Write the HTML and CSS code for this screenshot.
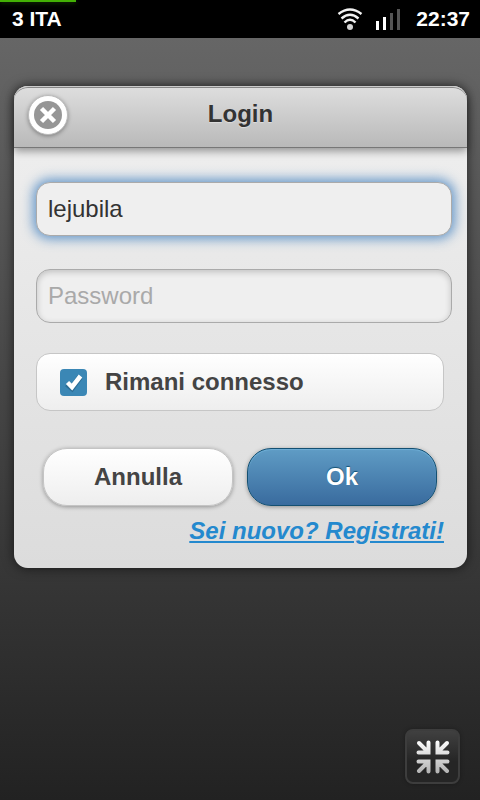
FILE: index.html
```
<!DOCTYPE html>
<html lang="it">
<head>
<meta charset="utf-8">
<meta name="viewport" content="width=device-width, initial-scale=1">
<title>Login</title>
<link rel="stylesheet" href="styles.css">
</head>
<body>
<header class="status">
  <div class="progress"></div>
  <span class="carrier">3 ITA</span>
  <svg class="wifi" width="26" height="24" viewBox="0 0 26 24" aria-hidden="true">
    <g fill="none" stroke="#f2f2f2" stroke-width="2.400">
      <path d="M1.500 7Q13 -2 24.500 7"/>
      <path d="M4.500 11.500Q13 4 21.500 11.500"/>
      <path d="M7.500 15.500Q13 10 18.500 15.500"/>
    </g>
    <circle cx="13" cy="20" r="3" fill="#d5d5d5"/>
  </svg>
  <svg class="signal" width="25" height="22" viewBox="0 0 25 22" aria-hidden="true">
    <path fill="#fff" d="M0 13h3v9H0zM7 9h3v13H7z"/>
    <path fill="#555" d="M14 5h3v17h-3zM21 1h3v21h-3z"/>
  </svg>
  <time class="clock">22:37</time>
</header>
<main class="screen">
  <section class="dialog" aria-labelledby="title">
    <div class="dialog-head">
      <button class="close" type="button" aria-label="Chiudi">
        <svg width="28" height="28" viewBox="0 0 28 28" aria-hidden="true">
          <circle cx="14" cy="14" r="14" fill="#969696"/>
          <path d="M7.500 7.500l13 13M20.500 7.500l-13 13" stroke="#fff" stroke-width="4.500"/>
        </svg>
      </button>
      <h1 class="title" id="title">Login</h1>
    </div>
    <form class="form">
      <input class="field field-active" type="text" aria-label="Nome utente" value="lejubila">
      <input class="field" type="password" aria-label="Password" placeholder="Password">
      <label class="remember">
        <input class="remember-input" type="checkbox" checked>
        <span class="tick">
          <svg width="27" height="27" viewBox="0 0 27 27" aria-hidden="true">
            <path d="M7 15l5 4L20 8" fill="none" stroke="#1c5478" stroke-opacity=".5" stroke-width="6"/>
            <path d="M7.500 13.500l4.500 4.500L20.500 7" fill="none" stroke="#fff" stroke-width="4.500"/>
          </svg>
        </span>
        <span>Rimani connesso</span>
      </label>
      <div class="actions">
        <button class="button" type="button">Annulla</button>
        <button class="button button-primary" type="submit">Ok</button>
      </div>
      <a class="register" href="#registrati">Sei nuovo? Registrati!</a>
    </form>
  </section>
  <button class="shrink" type="button" aria-label="Riduci">
    <svg width="34" height="34" viewBox="0 0 34 34" aria-hidden="true">
      <defs>
        <linearGradient id="metal" gradientUnits="userSpaceOnUse" x1="0" y1="0" x2="0" y2="34">
          <stop offset="0" stop-color="#fff"/>
          <stop offset="1" stop-color="#b0b0b0"/>
        </linearGradient>
      </defs>
      <g fill="none" stroke="url(#metal)" stroke-width="4" stroke-linecap="round" stroke-linejoin="miter">
        <path d="M3 3l9 9M12.500 2.500v10H2.500"/>
        <path d="M31 3l-9 9M21.500 2.500v10h10"/>
        <path d="M3 31l9-9M12.500 31.500v-10H2.500"/>
        <path d="M31 31l-9-9M21.500 31.500v-10h10"/>
      </g>
    </svg>
  </button>
</main>
</body>
</html>
```
FILE: styles.css
```
* {
  box-sizing: border-box;
}

body {
  display: flex;
  flex-direction: column;
  min-height: 100vh;
  margin: 0;
  font: 24px/28px "Liberation Sans", Arial, sans-serif;
  color: #333;
}

button,
input {
  margin: 0;
  font: inherit;
}

svg {
  display: block;
}

.status {
  position: relative;
  display: flex;
  align-items: center;
  height: 38px;
  padding: 0 10px 0 12px;
  background: #000;
  color: #fff;
  font-size: 21px;
  font-weight: bold;
}

.progress {
  position: absolute;
  top: 0;
  left: 0;
  width: 76px;
  height: 2px;
  background: #43b005;
  box-shadow: 0 1px 4px #184400;
}

.carrier {
  flex: 1;
}

.signal {
  margin: 0 15px 0 13px;
}

.screen {
  display: flex;
  flex: 1;
  flex-direction: column;
  justify-content: space-between;
  padding: 48px 13px 16px 14px;
  background: linear-gradient(#666, #222);
}

.dialog {
  border-radius: 14px;
  background: linear-gradient(#f0f0f0, #dcdcdc);
  box-shadow: 0 0 12px rgba(0, 0, 0, .6);
}

.dialog-head {
  display: grid;
  grid-template-columns: 40px 1fr 40px;
  align-items: center;
  height: 62px;
  padding: 0 14px 4px;
  border-top: 1px solid #ccc;
  border-bottom: 1px solid #777;
  border-radius: 14px 14px 0 0;
  background: linear-gradient(#dedede, #b9b9b9);
  box-shadow: inset 0 1px #888, 0 3px 8px rgba(0, 0, 0, .4);
}

.close {
  display: grid;
  place-content: center;
  width: 40px;
  height: 40px;
  padding: 0;
  border: 1px solid #bbb;
  border-radius: 50%;
  background: #fff;
  box-shadow: 0 1px 4px rgba(0, 0, 0, .35);
}

.title {
  margin: 0;
  padding-bottom: 2px;
  font-size: 24px;
  text-align: center;
  text-shadow: 0 1px 1px #ddd;
}

.form {
  display: flex;
  flex-direction: column;
  padding: 34px 23px 23px 22px;
}

.field {
  width: calc(100% + 8px);
  height: 54px;
  margin-bottom: 33px;
  padding: 0 11px;
  border: 1px solid #aaa;
  border-radius: 14px;
  outline: 0;
  background: #efefef;
  box-shadow: inset 0 2px 6px rgba(0, 0, 0, .2);
  color: #333;
}

.field::placeholder {
  color: #a9a9a9;
  opacity: 1;
}

.field + .field {
  margin-bottom: 30px;
}

.field-active {
  box-shadow: 0 0 12px 3px rgba(56, 123, 190, .75);
}

.remember {
  position: relative;
  display: flex;
  align-items: center;
  gap: 18px;
  height: 58px;
  padding: 0 23px;
  border: 1px solid #c6c6c6;
  border-radius: 14px;
  background: linear-gradient(#fff, #eee);
  color: #444;
  font-weight: bold;
}

.remember-input {
  position: absolute;
  width: 27px;
  height: 27px;
  opacity: 0;
}

.tick {
  border-radius: 4px;
  background: #3b87b5;
}

.actions {
  display: grid;
  grid-template-columns: 1fr 1fr;
  gap: 14px;
  padding: 37px 7px 11px;
}

.button {
  height: 58px;
  padding: 0;
  border: 1px solid #c4c4c4;
  border-radius: 24px;
  background: linear-gradient(#fff, #eee);
  box-shadow: 0 1px 4px rgba(0, 0, 0, .35);
  color: #444;
  font-weight: bold;
}

.button-primary {
  border-color: #145072;
  background: linear-gradient(#5f9cc5, #396b9e);
  box-shadow: inset 0 1px 1px #70b0d8, 0 1px 4px rgba(0, 0, 0, .35);
  color: #fff;
  text-shadow: 0 -1px 1px #145072;
}

.register {
  align-self: flex-end;
  color: #2489ce;
  font-weight: bold;
  font-style: italic;
}

.shrink {
  display: grid;
  place-content: center;
  align-self: flex-end;
  width: 55px;
  height: 55px;
  margin-right: 7px;
  padding: 0;
  border: 2px solid #3d3d3d;
  border-radius: 8px;
  background: linear-gradient(#404040, #252525 60%);
  box-shadow: 0 0 4px rgba(0, 0, 0, .3);
}
```
